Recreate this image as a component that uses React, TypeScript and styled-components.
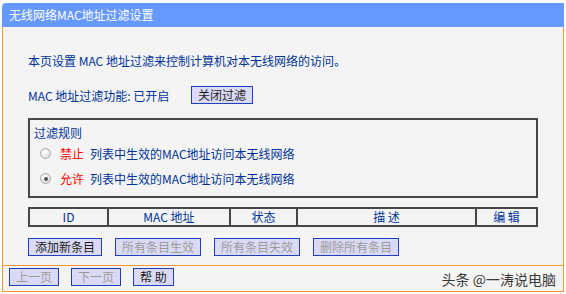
import React from "react";
import styled, { createGlobalStyle } from "styled-components";

const GlobalStyle = createGlobalStyle`
  body {
    margin: 0;
    background: #ffffff;
    font-family: "Noto Sans CJK SC", "DejaVu Sans", sans-serif;
    font-size: 12px;
  }
`;

const Panel = styled.div`
  width: 562px;
  margin: 3px 0 0 2px;
`;

const Header = styled.div`
  height: 24px;
  background: #6699ff;
  border-top-left-radius: 4px;
  color: #ffffff;
  font-size: 12px;
  line-height: 24px;
  padding-left: 7px;
`;

const Body = styled.div`
  background: #f4f4f4;
  border-left: 1px solid #ff9933;
  border-right: 1px solid #ff9933;
  padding: 26px 0 9px 25px;
  color: #003399;
`;

const Intro = styled.div`
  line-height: 16px;
`;

const StatusRow = styled.div`
  display: flex;
  align-items: center;
  height: 18px;
  margin-top: 17px;
`;

const StatusLabel = styled.span`
  width: 163px;
`;

const Button = styled.button<{ $off?: boolean }>`
  height: 18px;
  padding: 0 6px;
  border: 1px solid #1f3fc0;
  background: #dadaf6;
  color: ${(p) => (p.$off ? "#9a9a9a" : "#1a1a1a")};
  font-family: inherit;
  font-size: 12px;
  line-height: 16px;
  cursor: pointer;
`;

const Rules = styled.div`
  margin-top: 14px;
  width: 510px;
  height: 80px;
  box-sizing: border-box;
  border: 2px solid #474747;
  padding: 5px 0 0 4px;
`;

const Legend = styled.div`
  line-height: 16px;
`;

const RuleRow = styled.div`
  display: flex;
  align-items: center;
  height: 25px;
  &:first-of-type {
    margin-top: 4px;
  }
`;

const Radio = styled.span<{ $checked?: boolean }>`
  position: relative;
  width: 11px;
  height: 11px;
  margin-left: 6px;
  margin-right: 9px;
  border-radius: 50%;
  box-sizing: border-box;
  border: 1px solid #a8a8a8;
  background: radial-gradient(circle at 40% 35%, #ffffff, #d4d4d4);
  &::after {
    content: "";
    display: ${(p) => (p.$checked ? "block" : "none")};
    position: absolute;
    left: 2.5px;
    top: 2.5px;
    width: 4px;
    height: 4px;
    border-radius: 50%;
    background: #555555;
  }
`;

const Action = styled.span`
  color: #ff0000;
  margin-right: 6px;
`;

const Table = styled.div`
  margin-top: 9px;
  width: 510px;
  height: 20px;
  box-sizing: border-box;
  border: 2px solid #474747;
  display: grid;
  grid-template-columns: 77px 122px 67px 179px 1fr;
`;

const HeadCell = styled.div`
  text-align: center;
  line-height: 16px;
  border-left: 2px solid #474747;
  &:first-child {
    border-left: none;
  }
`;

const ButtonRow = styled.div`
  display: flex;
  gap: 13px;
  margin-top: 11px;
`;

const Footer = styled.div`
  position: relative;
  display: flex;
  gap: 12px;
  box-sizing: border-box;
  height: 27px;
  padding: 2px 0 0 6px;
  background: #f4f4f4;
  border: 1px solid #ff9933;
`;

const Watermark = styled.span`
  position: absolute;
  right: 7px;
  top: 3px;
  font-size: 14px;
  line-height: 20px;
  color: #3a3a3a;
`;

const columns = ["ID", "MAC 地址", "状态", "描 述", "编 辑"];

const rules = [
  { action: "禁止", checked: false },
  { action: "允许", checked: true },
];

const App = () => {
  return (
    <>
      <GlobalStyle />
      <Panel>
        <Header>无线网络MAC地址过滤设置</Header>
        <Body>
          <Intro>本页设置 MAC 地址过滤来控制计算机对本无线网络的访问。</Intro>
          <StatusRow>
            <StatusLabel>MAC 地址过滤功能: 已开启</StatusLabel>
            <Button>关闭过滤</Button>
          </StatusRow>
          <Rules>
            <Legend>过滤规则</Legend>
            {rules.map((r) => (
              <RuleRow key={r.action}>
                <Radio $checked={r.checked} />
                <Action>{r.action}</Action>
                列表中生效的MAC地址访问本无线网络
              </RuleRow>
            ))}
          </Rules>
          <Table>
            {columns.map((c) => (
              <HeadCell key={c}>{c}</HeadCell>
            ))}
          </Table>
          <ButtonRow>
            <Button>添加新条目</Button>
            <Button $off>所有条目生效</Button>
            <Button $off>所有条目失效</Button>
            <Button $off>删除所有条目</Button>
          </ButtonRow>
        </Body>
        <Footer>
          <Button $off>上一页</Button>
          <Button $off>下一页</Button>
          <Button>帮 助</Button>
          <Watermark>头条 @一涛说电脑</Watermark>
        </Footer>
      </Panel>
    </>
  );
};

export default App;
